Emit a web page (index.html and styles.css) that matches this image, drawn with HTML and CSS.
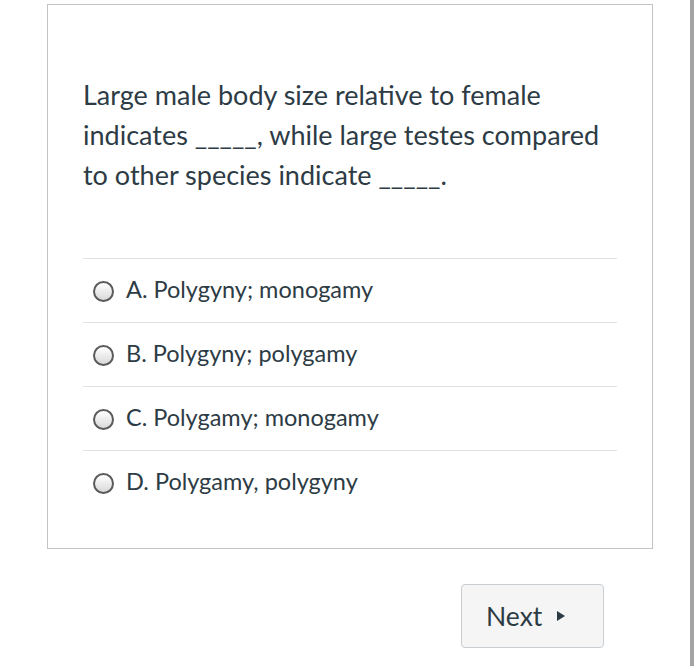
FILE: index.html
```html
<!DOCTYPE html>
<html>
<head>
<meta charset="utf-8">
<link rel="stylesheet" href="styles.css">
</head>
<body>
<div class="page">
  <div class="content">
    <div class="card">
      <p class="question">Large male body size relative to female indicates _____, while large testes compared to other species indicate _____.</p>
      <div class="answers">
        <label class="answer"><span class="radio"></span><span class="label">A. Polygyny; monogamy</span></label>
        <label class="answer"><span class="radio"></span><span class="label">B. Polygyny; polygamy</span></label>
        <label class="answer"><span class="radio"></span><span class="label">C. Polygamy; monogamy</span></label>
        <label class="answer"><span class="radio"></span><span class="label">D. Polygamy, polygyny</span></label>
      </div>
    </div>
    <div class="actions">
      <button class="next">Next <span class="tri"></span></button>
    </div>
  </div>
  <div class="edge"></div>
</div>
</body>
</html>
```
FILE: styles.css
```css
html, body {
  margin: 0;
  padding: 0;
  background: #ffffff;
}
body {
  font-family: Lato, "Open Sans", sans-serif;
  color: #2d3b45;
}
.page {
  display: flex;
  height: 666px;
  overflow: hidden;
}
.content {
  width: 690px;
  padding: 4px 0 0 47px;
  box-sizing: border-box;
}
.edge {
  width: 4px;
  background: #a3a3a3;
  height: 666px;
}
.card {
  width: 606px;
  height: 545px;
  box-sizing: border-box;
  border: 1px solid #c3c3c3;
  padding: 70px 35px 0 35px;
}
.question {
  margin: 0;
  font-size: 27px;
  line-height: 40px;
  width: 534px;
}
.answers {
  margin-top: 63px;
}
.answer {
  display: flex;
  align-items: center;
  gap: 12px;
  height: 60px;
  padding-bottom: 3px;
  border-top: 1px solid #e2e2e2;
  padding-left: 10px;
  font-size: 23.5px;
}
.radio {
  width: 17px;
  height: 17px;
  border: 2px solid #5a5a5a;
  border-radius: 50%;
  background: linear-gradient(#ffffff, #d9d9d9);
  flex: none;
  position: relative;
  top: 2px;
}
.actions {
  display: flex;
  justify-content: flex-end;
  width: 606px;
  padding-right: 49px;
  box-sizing: border-box;
  margin-top: 35px;
}
.next {
  width: 143px;
  height: 64px;
  background: #f5f5f5;
  border: 1px solid #c7cdd1;
  border-radius: 4px;
  font-family: Lato, "Open Sans", sans-serif;
  font-size: 26.5px;
  color: #2d3b45;
  display: flex;
  align-items: center;
  justify-content: flex-start;
  gap: 15px;
  padding: 0 0 0 24px;
}
.tri {
  width: 0;
  height: 0;
  border-top: 5px solid transparent;
  border-bottom: 5px solid transparent;
  border-left: 8px solid #2d3b45;
}
```
